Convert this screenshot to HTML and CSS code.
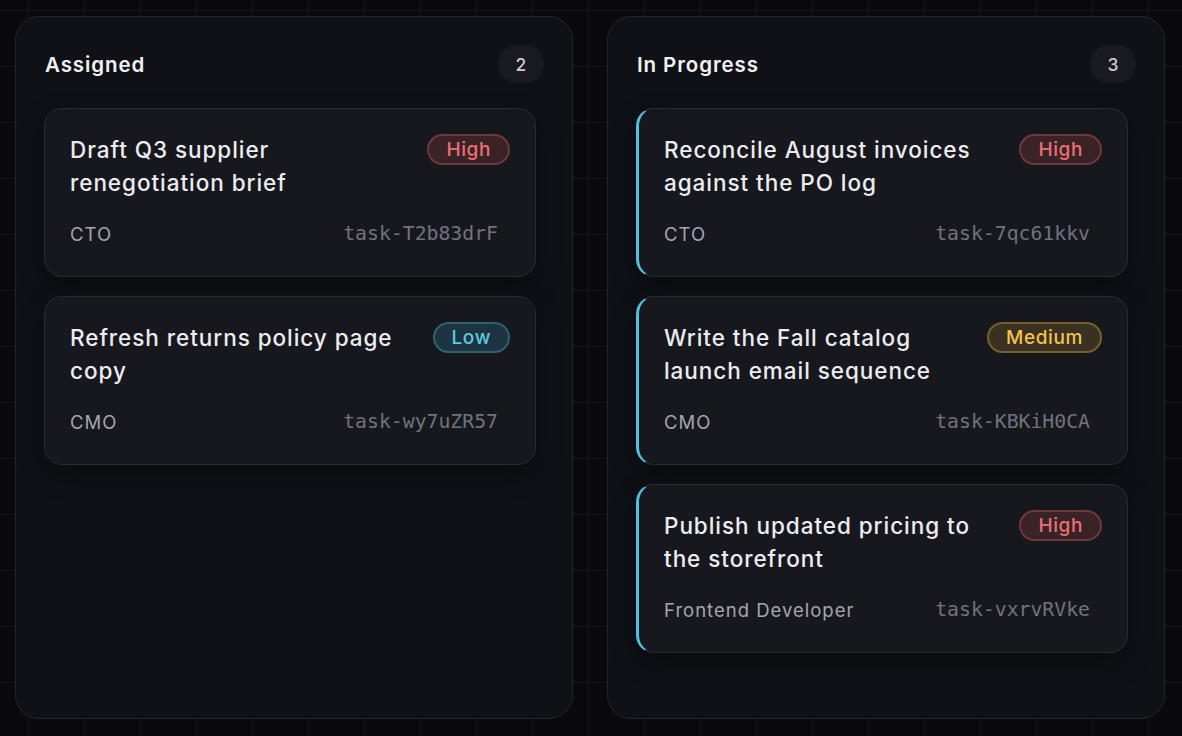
FILE: index.html
```html
<!DOCTYPE html>
<html lang="en">
<head>
    <meta charset="UTF-8">
    <meta name="viewport" content="width=device-width, initial-scale=1.0">
    <title>Task Board</title>
    <link rel="stylesheet" href="styles.css">
</head>
<body>

    <div class="board">
        <section class="column">
            <div class="column-header">
                <h2>Assigned</h2>
                <span class="count">2</span>
            </div>
            <div class="card-list">
                <div class="card">
                    <div class="card-top">
                        <h3>Draft Q3 supplier renegotiation brief</h3>
                        <span class="badge badge-high">High</span>
                    </div>
                    <div class="card-meta">
                        <span class="role">CTO</span>
                        <span class="task-id">task-T2b83drF</span>
                    </div>
                </div>
                <div class="card">
                    <div class="card-top">
                        <h3>Refresh returns policy page copy</h3>
                        <span class="badge badge-low">Low</span>
                    </div>
                    <div class="card-meta">
                        <span class="role">CMO</span>
                        <span class="task-id">task-wy7uZR57</span>
                    </div>
                </div>
            </div>
        </section>

        <section class="column">
            <div class="column-header">
                <h2>In Progress</h2>
                <span class="count">3</span>
            </div>
            <div class="card-list">
                <div class="card active">
                    <div class="card-top">
                        <h3>Reconcile August invoices against the PO log</h3>
                        <span class="badge badge-high">High</span>
                    </div>
                    <div class="card-meta">
                        <span class="role">CTO</span>
                        <span class="task-id">task-7qc61kkv</span>
                    </div>
                </div>
                <div class="card active">
                    <div class="card-top">
                        <h3>Write the Fall catalog launch email sequence</h3>
                        <span class="badge badge-medium">Medium</span>
                    </div>
                    <div class="card-meta">
                        <span class="role">CMO</span>
                        <span class="task-id">task-KBKiH0CA</span>
                    </div>
                </div>
                <div class="card active">
                    <div class="card-top">
                        <h3>Publish updated pricing to the storefront</h3>
                        <span class="badge badge-high">High</span>
                    </div>
                    <div class="card-meta">
                        <span class="role">Frontend Developer</span>
                        <span class="task-id">task-vxrvRVke</span>
                    </div>
                </div>
            </div>
        </section>
    </div>

</body>
</html>
```

FILE: styles.css
```css
* {
    box-sizing: border-box;
}
body {
    margin: 0;
    font-family: Inter, "Noto Sans", sans-serif;
    color: #ececf1;
    background-color: #0a0a0e;
    background-image:
        linear-gradient(to right, #141419 1px, transparent 1px),
        linear-gradient(to bottom, #141419 1px, transparent 1px);
    background-size: 56px 56px;
    background-position: 28px 10px;
}

.board {
    display: grid;
    grid-template-columns: 1fr 1fr;
    gap: 34px;
    height: 100vh;
    padding: 16px 17px 17px 15px;
}

.column {
    background-color: #101117;
    border: 1px solid #25262c;
    border-radius: 24px;
    padding-top: 28px;
}
.column-header {
    display: flex;
    align-items: center;
    justify-content: space-between;
    padding: 0 28px 0 29px;
    margin-bottom: 25px;
}
.column-header h2 {
    margin: 0;
    font-size: 20.5px;
    font-weight: 600;
    letter-spacing: 0.9px;
    color: #f1f1f4;
}
.count {
    display: flex;
    align-items: center;
    justify-content: center;
    min-width: 46px;
    height: 38px;
    border-radius: 999px;
    background-color: #191a20;
    color: #c9cad2;
    font-size: 17.5px;
    font-weight: 500;
}

.card-list {
    display: flex;
    flex-direction: column;
    gap: 19px;
    padding: 0 36px 0 28px;
}
.card {
    background-color: #17181e;
    border: 1px solid #2a2b31;
    border-radius: 18px;
    padding: 24px 25px 30px 25px;
    box-shadow: 0 10px 24px rgba(0, 0, 0, 0.35);
}
.card.active {
    border-left: 3px solid #4fc2e0;
}
.card-top {
    display: flex;
    justify-content: space-between;
    align-items: flex-start;
    gap: 16px;
}
.card-top h3 {
    margin: 0;
    font-size: 22.5px;
    font-weight: 500;
    letter-spacing: 0.95px;
    line-height: 33px;
    color: #ececf1;
}
.badge {
    flex-shrink: 0;
    margin-top: 1px;
    height: 31px;
    line-height: 27px;
    padding: 0 17px;
    border-radius: 999px;
    border: 2px solid;
    font-size: 19px;
    font-weight: 500;
    letter-spacing: 0.6px;
}
.badge-high {
    background-color: #3a2327;
    border-color: #6e383d;
    color: #ec6f74;
}
.badge-low {
    background-color: #1c3440;
    border-color: #2d6275;
    color: #5cc8e6;
}
.badge-medium {
    background-color: #3a3122;
    border-color: #76602f;
    color: #f2c34a;
}

.card-meta {
    display: flex;
    justify-content: space-between;
    align-items: center;
    margin-top: 23px;
    padding-right: 12px;
    line-height: 24px;
}
.role {
    font-size: 18.5px;
    letter-spacing: 1px;
    color: #a4a6b0;
}
.task-id {
    font-family: "DejaVu Sans Mono", monospace;
    font-size: 19.8px;
    color: #70737e;
}
```
